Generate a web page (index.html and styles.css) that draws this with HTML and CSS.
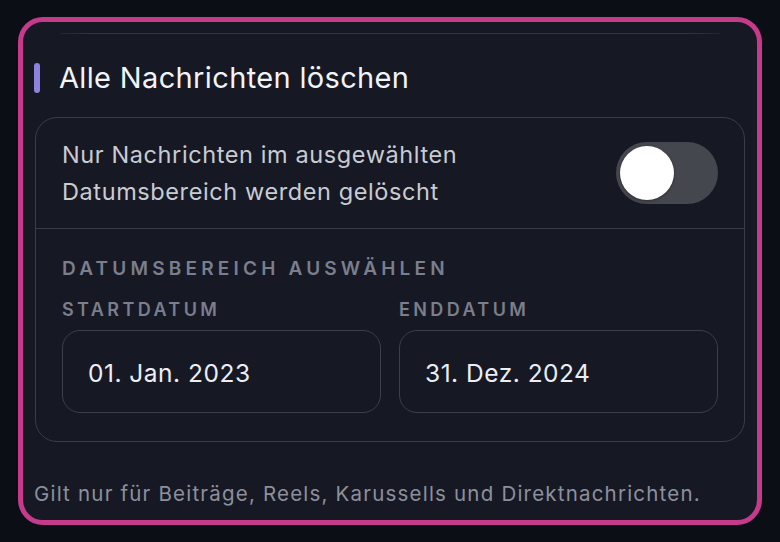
FILE: index.html
```html
<!DOCTYPE html>
<html lang="de">
<head>
<meta charset="utf-8">
<title>Alle Nachrichten löschen</title>
<link rel="stylesheet" href="styles.css">
</head>
<body>
<div class="card">
  <div class="top-divider"></div>
  <div class="title-row">
    <span class="accent"></span>
    <h2 class="title">Alle Nachrichten löschen</h2>
  </div>
  <div class="box">
    <div class="toggle-row">
      <p class="toggle-text">Nur Nachrichten im ausgewählten<br>Datumsbereich werden gelöscht</p>
      <div class="toggle"><span class="knob"></span></div>
    </div>
    <div class="range">
      <div class="range-title">DATUMSBEREICH AUSWÄHLEN</div>
      <div class="fields">
        <div class="field">
          <div class="field-label">STARTDATUM</div>
          <div class="field-input">01. Jan. 2023</div>
        </div>
        <div class="field">
          <div class="field-label">ENDDATUM</div>
          <div class="field-input">31. Dez. 2024</div>
        </div>
      </div>
    </div>
  </div>
  <p class="footer">Gilt nur für Beiträge, Reels, Karussells und Direktnachrichten.</p>
</div>
</body>
</html>
```
FILE: styles.css
```css
* { box-sizing: border-box; }
html, body { margin: 0; padding: 0; }
body {
  background: #0c0e15;
  font-family: Inter, "Noto Sans", "DejaVu Sans", sans-serif;
  width: 780px;
  height: 542px;
  overflow: hidden;
  padding-top: 17px;
  padding-left: 18px;
}
.card {
  width: 744px;
  height: 508px;
  border: 5px solid #c53a8b;
  border-radius: 25px;
  background: #161924;
  padding: 11px 12px 0 12px;
}
.top-divider {
  height: 1px;
  margin: 0 25px;
  background: linear-gradient(90deg, rgba(60,64,78,0.3) 0, #30343f 28px, #30343f calc(100% - 30px), rgba(60,64,78,0.3) 100%);
}
.title-row {
  display: flex;
  align-items: center;
  margin-top: 27px;
  height: 34px;
}
.accent {
  width: 6px;
  height: 30px;
  border-radius: 3px;
  background: #8c82e0;
  margin-left: -1px;
  margin-right: 19px;
}
.title {
  margin: 0;
  font-size: 29px;
  line-height: 34px;
  font-weight: 400;
  letter-spacing: 0.35px;
  color: #f2f3f7;
}
.box {
  margin-top: 22px;
  border: 1.5px solid #3a3d49;
  border-radius: 22px;
}
.toggle-row {
  display: flex;
  align-items: center;
  justify-content: space-between;
  height: 111px;
  padding: 0 26px;
  border-bottom: 1.5px solid #3a3d49;
}
.toggle-text {
  margin: 0;
  font-size: 23.5px;
  line-height: 37px;
  letter-spacing: 0.6px;
  color: #c9cbd3;
}
.toggle {
  width: 102px;
  height: 62px;
  border-radius: 31px;
  background: #45474f;
  padding: 4px;
  display: flex;
  align-items: center;
}
.knob {
  width: 54px;
  height: 54px;
  border-radius: 50%;
  background: #ffffff;
  box-shadow: 0 1px 3px rgba(0,0,0,0.35);
}
.range {
  padding: 30px 26px 28px 26px;
}
.range-title, .field-label {
  font-size: 18px;
  line-height: 20px;
  font-weight: 600;
  letter-spacing: 3.4px;
  color: #7b7e8c;
}
.range-title {
  font-size: 19px;
  letter-spacing: 4.2px;
}
.fields {
  display: grid;
  grid-template-columns: 1fr 1fr;
  column-gap: 18px;
  margin-top: 21px;
}
.field-label { margin-bottom: 10px; }
.field-input {
  height: 83px;
  border: 1.5px solid #3c3f4b;
  border-radius: 18px;
  display: flex;
  align-items: center;
  padding: 3px 25px 0 25px;
  font-size: 24.5px;
  letter-spacing: 0.5px;
  color: #eceef3;
}
.footer {
  margin: 40px 0 0 -1px;
  font-size: 20.5px;
  line-height: 24px;
  letter-spacing: 1.2px;
  color: #8d909c;
  white-space: nowrap;
}
```
